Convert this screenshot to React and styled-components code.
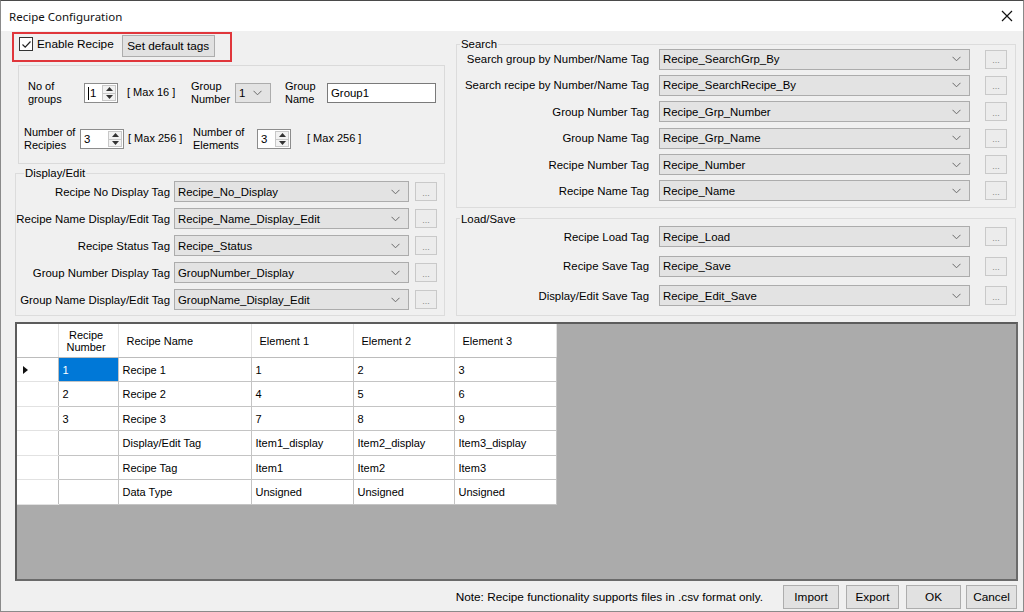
import React from 'react';
import styled, { createGlobalStyle } from 'styled-components';

const GlobalStyle = createGlobalStyle`
  html, body {
    margin: 0;
    padding: 0;
    background: #ffffff;
  }
  body {
    font-family: 'Liberation Sans', Arial, sans-serif;
    font-size: 11.4px;
    color: #000;
  }
  * {
    box-sizing: border-box;
  }
`;

const leftTags = [
  ['Recipe No Display Tag', 'Recipe_No_Display'],
  ['Recipe Name Display/Edit Tag', 'Recipe_Name_Display_Edit'],
  ['Recipe Status Tag', 'Recipe_Status'],
  ['Group Number Display Tag', 'GroupNumber_Display'],
  ['Group Name Display/Edit Tag', 'GroupName_Display_Edit'],
];

const searchTags = [
  ['Search group by Number/Name Tag', 'Recipe_SearchGrp_By'],
  ['Search recipe by Number/Name Tag', 'Recipe_SearchRecipe_By'],
  ['Group Number Tag', 'Recipe_Grp_Number'],
  ['Group Name Tag', 'Recipe_Grp_Name'],
  ['Recipe Number Tag', 'Recipe_Number'],
  ['Recipe Name Tag', 'Recipe_Name'],
];

const saveTags = [
  ['Recipe Load Tag', 'Recipe_Load'],
  ['Recipe Save Tag', 'Recipe_Save'],
  ['Display/Edit Save Tag', 'Recipe_Edit_Save'],
];

const rows = [
  { num: '1', name: 'Recipe 1', vals: ['1', '2', '3'], current: true },
  { num: '2', name: 'Recipe 2', vals: ['4', '5', '6'] },
  { num: '3', name: 'Recipe 3', vals: ['7', '8', '9'] },
  { num: '', name: 'Display/Edit Tag', vals: ['Item1_display', 'Item2_display', 'Item3_display'] },
  { num: '', name: 'Recipe Tag', vals: ['Item1', 'Item2', 'Item3'] },
  { num: '', name: 'Data Type', vals: ['Unsigned', 'Unsigned', 'Unsigned'] },
];

const Chevron = () => (
  <svg width="9" height="6" viewBox="0 0 9 6">
    <path d="M0.5 0.8 L4.5 4.8 L8.5 0.8" fill="none" stroke="#6a6a6a" strokeWidth="1" />
  </svg>
);

const Arrow = ({ up }) => (
  <svg width="7" height="4" viewBox="0 0 7 4">
    <path d={up ? 'M0 4 L3.5 0 L7 4 Z' : 'M0 0 L3.5 4 L7 0 Z'} fill="#333" />
  </svg>
);

const Spinner = ({ w, value, caret }) => (
  <SpinBox $w={w}>
    <SpinText>
      {caret && <Caret />}
      {value}
    </SpinText>
    <SpinButtons>
      <SpinBtn><Arrow up /></SpinBtn>
      <SpinBtn><Arrow /></SpinBtn>
    </SpinButtons>
  </SpinBox>
);

const TagRow = ({ label, value, cfg }) => (
  <Row>
    <TagLabel $w={cfg.labelW} $pr={cfg.labelPad}>{label}</TagLabel>
    <Combo $w={cfg.selectW}>
      <span>{value}</span>
      <Chevron />
    </Combo>
    <DotsButton $ml={cfg.btnGap}>...</DotsButton>
  </Row>
);

const leftCfg = { labelW: 158, labelPad: 4, selectW: 235, btnGap: 6 };
const rightCfg = { labelW: 202, labelPad: 10, selectW: 311, btnGap: 15 };

const App = () => {
  return (
    <>
      <GlobalStyle />
      <Window>
        <TitleBar>
          <Title>Recipe Configuration</Title>
          <svg width="12" height="12" viewBox="0 0 12 12">
            <path d="M1 1 L11 11 M11 1 L1 11" stroke="#111" strokeWidth="1.2" />
          </svg>
        </TitleBar>
        <Body>
          <TopSection>
            <LeftCol>
              <Highlight>
                <CheckWrap>
                  <CheckBox>
                    <svg width="11" height="11" viewBox="0 0 11 11">
                      <path d="M1.5 5.5 L4.2 8.2 L9.5 2.5" fill="none" stroke="#222" strokeWidth="1.2" />
                    </svg>
                  </CheckBox>
                  <span>Enable Recipe</span>
                </CheckWrap>
                <PushButton $w={93} $h={22} $ml={8} $mt={1}>Set default tags</PushButton>
              </Highlight>

              <Panel>
                <PanelRow>
                  <SmallLabel $w={56} $ml={9}>No of<br />groups</SmallLabel>
                  <Spinner w={34} value="1" caret />
                  <SmallLabel $w={64} $ml={9}>[ Max 16 ]</SmallLabel>
                  <SmallLabel $w={44}>Group<br />Number</SmallLabel>
                  <Combo $w={36} $h={20}>
                    <span>1</span>
                    <Chevron />
                  </Combo>
                  <SmallLabel $w={42} $ml={14}>Group<br />Name</SmallLabel>
                  <TextBox $w={109}>Group1</TextBox>
                </PanelRow>
                <PanelRow>
                  <SmallLabel $w={56} $ml={5}>Number of<br />Recipies</SmallLabel>
                  <Spinner w={44} value="3" />
                  <SmallLabel $w={65} $ml={4}>[ Max 256 ]</SmallLabel>
                  <SmallLabel $w={64}>Number of<br />Elements</SmallLabel>
                  <Spinner w={34} value="3" />
                  <SmallLabel $w={70} $ml={16}>[ Max 256 ]</SmallLabel>
                </PanelRow>
              </Panel>

              <GroupBox $w={430} $ml={3} $mt={5}>
                <Legend $ml={8}>Display/Edit</Legend>
                <TagList $gap={6} $pt={4} $pb={5}>
                  {leftTags.map(([l, v]) => (
                    <TagRow key={l} label={l} value={v} cfg={leftCfg} />
                  ))}
                </TagList>
              </GroupBox>
            </LeftCol>

            <RightCol>
              <GroupBox $w={560} $mt={8}>
                <Legend $ml={3}>Search</Legend>
                <TagList $gap={5.4} $pt={0.5} $pb={5.5}>
                  {searchTags.map(([l, v]) => (
                    <TagRow key={l} label={l} value={v} cfg={rightCfg} />
                  ))}
                </TagList>
              </GroupBox>
              <GroupBox $w={560} $mt={7}>
                <Legend $ml={3}>Load/Save</Legend>
                <TagList $gap={8.5} $pt={3.5} $pb={9}>
                  {saveTags.map(([l, v]) => (
                    <TagRow key={l} label={l} value={v} cfg={rightCfg} />
                  ))}
                </TagList>
              </GroupBox>
            </RightCol>
          </TopSection>

          <GridArea>
            <Table>
              <colgroup>
                <col style={{ width: 41 }} />
                <col style={{ width: 60 }} />
                <col style={{ width: 133 }} />
                <col style={{ width: 102 }} />
                <col style={{ width: 101 }} />
                <col style={{ width: 102 }} />
              </colgroup>
              <thead>
                <tr>
                  <HeadCell />
                  <HeadCell><TwoLine>Recipe<br />Number</TwoLine></HeadCell>
                  <HeadCell>Recipe Name</HeadCell>
                  <HeadCell>Element 1</HeadCell>
                  <HeadCell>Element 2</HeadCell>
                  <HeadCell>Element 3</HeadCell>
                </tr>
              </thead>
              <tbody>
                {rows.map((r, i) => (
                  <tr key={i}>
                    <RowHead>
                      {r.current && (
                        <svg width="5" height="8" viewBox="0 0 5 8">
                          <path d="M0 0 L5 4 L0 8 Z" fill="#111" />
                        </svg>
                      )}
                    </RowHead>
                    <Cell $selected={r.current}>{r.num}</Cell>
                    <Cell>{r.name}</Cell>
                    {r.vals.map((v, j) => (
                      <Cell key={j}>{v}</Cell>
                    ))}
                  </tr>
                ))}
              </tbody>
            </Table>
          </GridArea>

          <Footer>
            <Note>Note: Recipe functionality supports files in .csv format only.</Note>
            <PushButton $w={56} $h={24} $ml={20}>Import</PushButton>
            <PushButton $w={53} $h={24} $ml={7}>Export</PushButton>
            <PushButton $w={55} $h={24} $ml={7}>OK</PushButton>
            <PushButton $w={51} $h={24} $ml={5}>Cancel</PushButton>
          </Footer>
        </Body>
      </Window>
    </>
  );
};

const Window = styled.div`
  width: 1024px;
  height: 612px;
  display: flex;
  flex-direction: column;
  background: #f0f0f0;
  border: 1px solid #8a8a8a;
  border-top-color: #4a4a4a;
  overflow: hidden;
`;

const TitleBar = styled.div`
  height: 30px;
  flex-shrink: 0;
  background: #ffffff;
  display: flex;
  align-items: center;
  justify-content: space-between;
  padding: 0 10px 0 8px;
`;

const Title = styled.div`
  font-family: 'Noto Sans', 'Liberation Sans', sans-serif;
  font-size: 11.5px;
  color: #111;
`;

const Body = styled.div`
  flex: 1;
  display: flex;
  flex-direction: column;
  padding: 1px 0 0 11px;
`;

const TopSection = styled.div`
  display: flex;
  gap: 10px;
`;

const LeftCol = styled.div`
  width: 434px;
  display: flex;
  flex-direction: column;
`;

const RightCol = styled.div`
  width: 560px;
  display: flex;
  flex-direction: column;
`;

const Highlight = styled.div`
  width: 220px;
  height: 30px;
  border: 2px solid #e0363b;
  display: flex;
  align-items: flex-start;
  padding-left: 5px;
`;

const CheckWrap = styled.label`
  display: flex;
  align-items: center;
  gap: 4px;
  margin-top: 3px;
  height: 14px;
  font-size: 11.8px;
`;

const CheckBox = styled.span`
  width: 14px;
  height: 14px;
  border: 1px solid #333;
  background: #fff;
  display: flex;
  align-items: center;
  justify-content: center;
`;

const PushButton = styled.div`
  width: ${p => p.$w}px;
  height: ${p => p.$h}px;
  margin-left: ${p => p.$ml || 0}px;
  margin-top: ${p => p.$mt || 0}px;
  background: #e1e1e1;
  border: 1px solid #adadad;
  display: flex;
  align-items: center;
  justify-content: center;
  flex-shrink: 0;
  font-size: 11.8px;
`;

const Panel = styled.div`
  width: 427px;
  margin: 3px 0 0 6px;
  border: 1px solid #dadada;
  padding: 14px 0 11px 0;
  display: flex;
  flex-direction: column;
  gap: 20px;
`;

const PanelRow = styled.div`
  height: 26px;
  display: flex;
  align-items: center;
`;

const SmallLabel = styled.div`
  width: ${p => p.$w}px;
  margin-left: ${p => p.$ml || 0}px;
  line-height: 13.5px;
  font-size: 11px;
  white-space: nowrap;
  flex-shrink: 0;
`;

const SpinBox = styled.div`
  width: ${p => p.$w}px;
  height: 20px;
  display: flex;
  background: #fff;
  border: 1px solid #8c8c8c;
  flex-shrink: 0;
`;

const SpinText = styled.div`
  flex: 1;
  display: flex;
  align-items: center;
  padding-left: 3px;
`;

const Caret = styled.span`
  width: 1px;
  height: 13px;
  background: #000;
  margin-right: 1px;
`;

const SpinButtons = styled.div`
  width: 14px;
  margin: 1px;
  display: flex;
  flex-direction: column;
  border: 1px solid #c8c8c8;
`;

const SpinBtn = styled.div`
  flex: 1;
  display: flex;
  align-items: center;
  justify-content: center;
  background: #f2f2f2;

  & + & {
    border-top: 1px solid #c8c8c8;
  }
`;

const TextBox = styled.div`
  width: ${p => p.$w}px;
  height: 20px;
  background: #fff;
  border: 1px solid #7a7a7a;
  padding-left: 3px;
  display: flex;
  align-items: center;
  flex-shrink: 0;
`;

const Combo = styled.div`
  width: ${p => p.$w}px;
  height: ${p => p.$h || 21}px;
  background: #e3e3e3;
  border: 1px solid #acacac;
  display: flex;
  align-items: center;
  justify-content: space-between;
  padding: 0 8px 0 3px;
  flex-shrink: 0;
  white-space: nowrap;
`;

const GroupBox = styled.fieldset`
  width: ${p => p.$w}px;
  margin: ${p => p.$mt || 0}px 0 0 ${p => p.$ml || 0}px;
  padding: 0;
  min-inline-size: 0;
  border: 1px solid #dcdcdc;
`;

const Legend = styled.legend`
  margin-left: ${p => p.$ml}px;
  padding: 0 1px;
  line-height: 8px;
  font-size: 11.4px;
`;

const TagList = styled.div`
  display: flex;
  flex-direction: column;
  gap: ${p => p.$gap}px;
  padding-top: ${p => p.$pt}px;
  padding-bottom: ${p => p.$pb}px;
`;

const Row = styled.div`
  height: 21px;
  display: flex;
  align-items: center;
`;

const TagLabel = styled.div`
  width: ${p => p.$w}px;
  padding-right: ${p => p.$pr}px;
  display: flex;
  justify-content: flex-end;
  white-space: nowrap;
  flex-shrink: 0;
`;

const DotsButton = styled.div`
  width: 22px;
  height: 19px;
  margin-left: ${p => p.$ml}px;
  background: #ececec;
  border: 1px solid #c9c9c9;
  color: #8a8a8a;
  font-size: 9px;
  display: flex;
  align-items: center;
  justify-content: center;
  padding-top: 2px;
`;

const GridArea = styled.div`
  width: 1003px;
  height: 259px;
  margin: 6px 0 0 3px;
  background: #ababab;
  border: 2px solid #6a6a6a;
  border-top-color: #5c5c5c;
  border-left-color: #5c5c5c;
`;

const Table = styled.table`
  border-collapse: collapse;
  table-layout: fixed;
  width: 539px;
  background: #fff;
  font-size: 11px;
`;

const HeadCell = styled.th`
  height: 33px;
  font-weight: normal;
  text-align: left;
  padding: 0 0 0 8px;
  border-right: 1px solid #e2e2e2;
  border-bottom: 1px solid #bcbcbc;
  white-space: nowrap;
`;

const TwoLine = styled.span`
  display: inline-block;
  text-align: center;
  line-height: 12px;
`;

const RowHead = styled.td`
  height: 24.5px;
  padding: 0 0 0 6px;
  border-right: 1px solid #bcbcbc;
  border-bottom: 1px solid #e2e2e2;
`;

const Cell = styled.td`
  height: 24.5px;
  padding: 0 0 0 4px;
  border: 1px solid #c4c4c4;
  white-space: nowrap;
  background: ${p => (p.$selected ? '#0078d7' : '#fff')};
  color: ${p => (p.$selected ? '#fff' : '#000')};
`;

const Footer = styled.div`
  display: flex;
  align-items: center;
  justify-content: flex-end;
  margin-top: 4px;
  padding-right: 6px;
`;

const Note = styled.div`
  white-space: nowrap;
  font-size: 11.8px;
`;

export default App;
